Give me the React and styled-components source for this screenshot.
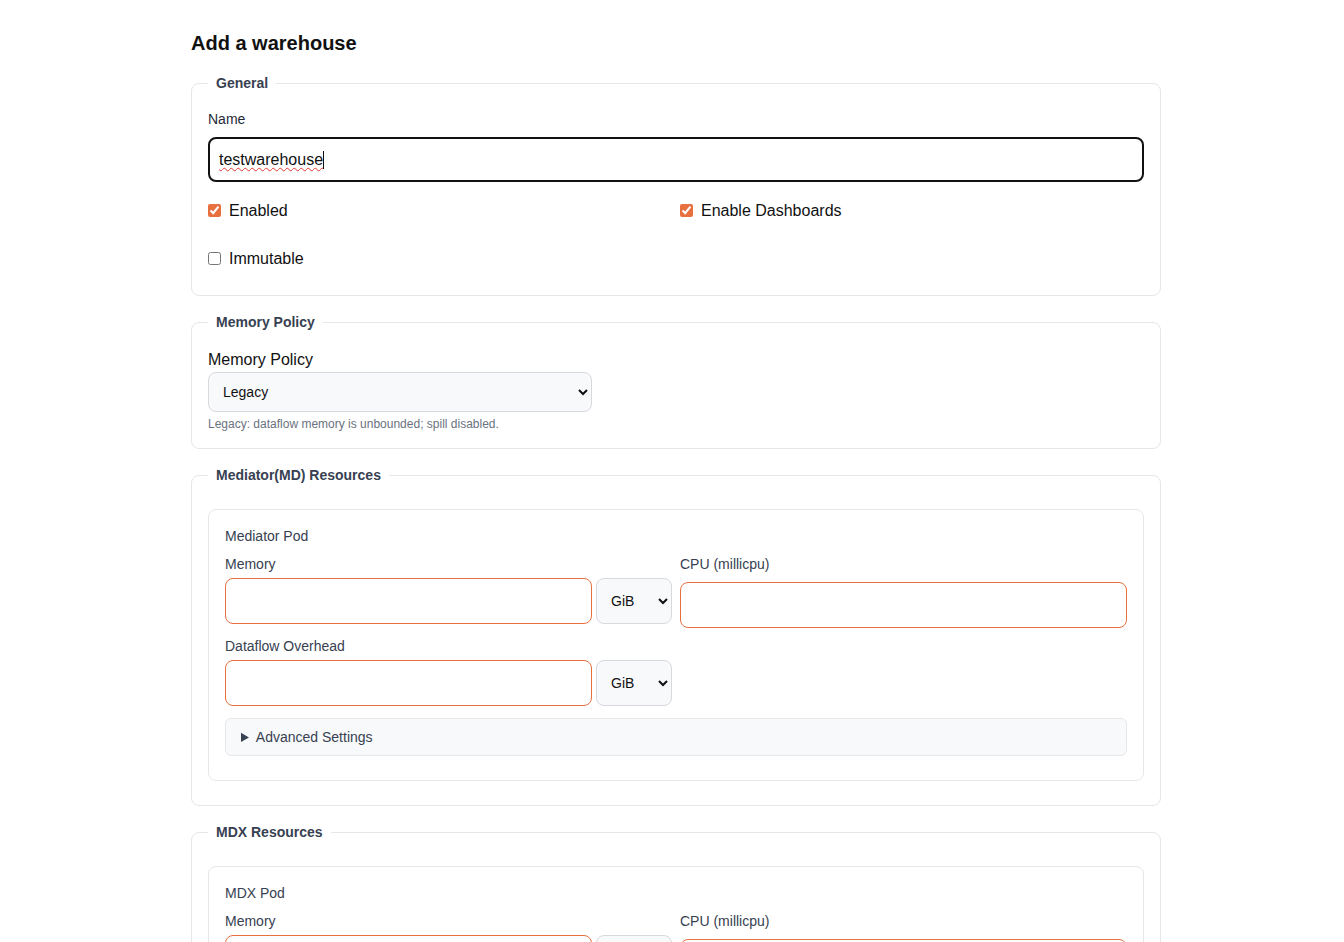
import styled, { createGlobalStyle } from 'styled-components';

const GlobalStyle = createGlobalStyle`
  body {
    margin: 0;
    background: #fff;
    color: #111;
    font-family: "Liberation Sans", Arial, sans-serif;
  }
  * { box-sizing: border-box; }
`;

const accent = '#e8703f';

const Page = styled.div`
  display: flex;
  justify-content: center;
  padding: 32px 0 40px 8px;
`;

const Form = styled.form`
  width: 970px;
`;

const Title = styled.h2`
  margin: 0 0 20px;
  font-size: 20px;
  line-height: 23px;
  font-weight: 700;
`;

const Section = styled.fieldset`
  margin: 0 0 18px;
  padding: 12px 16px ${p => p.$bottom || '16px'};
  min-width: 0;
  border: 1px solid #e5e7eb;
  border-radius: 8px;
`;

const Legend = styled.legend`
  padding: 0 8px;
  font-size: 14px;
  line-height: 16px;
  font-weight: 700;
  color: #374151;
`;

const NameLabel = styled.label`
  display: block;
  margin: 8px 0 10px;
  font-size: 14px;
  line-height: 16px;
  color: #1f2937;
`;

const NameWrap = styled.div`
  position: relative;
`;

const NameInput = styled.input`
  display: block;
  width: 100%;
  height: 45px;
  padding: 0 9px;
  border: 2px solid #111;
  border-radius: 8px;
  font: 16px "Liberation Sans", Arial, sans-serif;
  color: #111;
  caret-color: #111;
  outline: none;
`;

/* spell-check squiggle and caret drawn over the focused field */
const Squiggle = styled.span`
  position: absolute;
  left: 11px;
  top: 0;
  line-height: 45px;
  font-size: 16px;
  color: transparent;
  pointer-events: none;
  text-decoration: underline wavy #e53935;
  text-decoration-thickness: 1px;
  text-underline-offset: 2px;

  &::after {
    content: '';
    position: absolute;
    right: -1px;
    top: 14px;
    width: 1px;
    height: 18px;
    background: #111;
  }
`;

const Checks = styled.div`
  display: grid;
  grid-template-columns: 1fr 1fr;
  column-gap: 8px;
  row-gap: 24px;
  margin: 17px 0 8px;
`;

const CheckLabel = styled.label`
  display: flex;
  align-items: center;
  gap: 8px;
  height: 24px;
  font-size: 16px;
  color: #111;

  input {
    width: 13px;
    height: 13px;
    margin: 0 0 1px;
    accent-color: ${accent};
  }
`;

const PolicyLabel = styled.label`
  display: block;
  margin: 8px 0 3px;
  font-size: 16px;
  line-height: 19px;
  color: #111;
`;

const Select = styled.select`
  display: block;
  width: ${p => p.$width || '100%'};
  height: ${p => p.$height || '40px'};
  padding: 0 ${p => p.$pad || '10px'};
  border: 1px solid #d6d9de;
  border-radius: 8px;
  background: #f8f9fb;
  color: #111;
  font: 14px "Liberation Sans", Arial, sans-serif;
  flex-shrink: 0;
`;

const Hint = styled.div`
  margin: 5px 0 1px;
  font-size: 12px;
  line-height: 14px;
  color: #6b7280;
`;

const PodCard = styled.div`
  margin-top: 14px;
  padding: 18px 16px 24px;
  border: 1px solid #e5e7eb;
  border-radius: 8px;
`;

const PodTitle = styled.div`
  margin-bottom: 11px;
  font-size: 14px;
  line-height: 17px;
  color: #374151;
`;

const Grid = styled.div`
  display: grid;
  grid-template-columns: 1fr 1fr;
  column-gap: 8px;
  align-items: start;
`;

const Field = styled.div`
  display: flex;
  flex-direction: column;
  height: 68px;
  margin-bottom: 14px;
`;

const FieldLabel = styled.label`
  margin-bottom: ${p => p.$gap || '5px'};
  font-size: 14px;
  line-height: 17px;
  color: #374151;
`;

const InputRow = styled.div`
  display: flex;
  gap: 4px;
`;

const NumberInput = styled.input`
  flex: ${p => p.$grow ? '1' : 'none'};
  width: 100%;
  min-width: 0;
  height: 46px;
  padding: 0 10px;
  border: 1px solid ${accent};
  border-radius: 8px;
  font: 16px "Liberation Sans", Arial, sans-serif;
  outline: none;
`;

const Advanced = styled.details`
  margin-top: -2px;
  border: 1px solid #e5e7eb;
  border-radius: 6px;
  background: #f8f9fa;

  summary {
    padding: 0 15px;
    height: 36px;
    line-height: 36px;
    font-size: 14px;
    color: #374151;
    cursor: pointer;
  }
`;

const UnitPicker = () => (
  <Select $width="76px" $height="46px" $pad="10px" defaultValue="GiB">
    <option>MiB</option>
    <option>GiB</option>
  </Select>
);

const MemoryField = ({ label }) => (
  <Field>
    <FieldLabel>{label}</FieldLabel>
    <InputRow>
      <NumberInput $grow type="text" />
      <UnitPicker />
    </InputRow>
  </Field>
);

const ResourceSection = ({ legend, pod, overhead }) => (
  <Section $bottom="24px">
    <Legend>{legend}</Legend>
    <PodCard>
      <PodTitle>{pod}</PodTitle>
      <Grid>
        <MemoryField label="Memory" />
        <Field>
          <FieldLabel $gap="9px">CPU (millicpu)</FieldLabel>
          <NumberInput type="text" />
        </Field>
        {overhead && <MemoryField label="Dataflow Overhead" />}
      </Grid>
      <Advanced>
        <summary>Advanced Settings</summary>
      </Advanced>
    </PodCard>
  </Section>
);

const App = () => (
  <>
    <GlobalStyle />
    <Page>
      <Form onSubmit={e => e.preventDefault()}>
        <Title>Add a warehouse</Title>

        <Section>
          <Legend>General</Legend>
          <NameLabel htmlFor="wh-name">Name</NameLabel>
          <NameWrap>
            <NameInput id="wh-name" defaultValue="testwarehouse" />
            <Squiggle aria-hidden="true">testwarehouse</Squiggle>
          </NameWrap>
          <Checks>
            <CheckLabel><input type="checkbox" defaultChecked />Enabled</CheckLabel>
            <CheckLabel><input type="checkbox" defaultChecked />Enable Dashboards</CheckLabel>
            <CheckLabel><input type="checkbox" />Immutable</CheckLabel>
          </Checks>
        </Section>

        <Section>
          <Legend>Memory Policy</Legend>
          <PolicyLabel>Memory Policy</PolicyLabel>
          <Select $width="384px" defaultValue="legacy">
            <option value="legacy">Legacy</option>
            <option value="bounded">Bounded</option>
          </Select>
          <Hint>Legacy: dataflow memory is unbounded; spill disabled.</Hint>
        </Section>

        <ResourceSection legend="Mediator(MD) Resources" pod="Mediator Pod" overhead />
        <ResourceSection legend="MDX Resources" pod="MDX Pod" />
      </Form>
    </Page>
  </>
);

export default App;
